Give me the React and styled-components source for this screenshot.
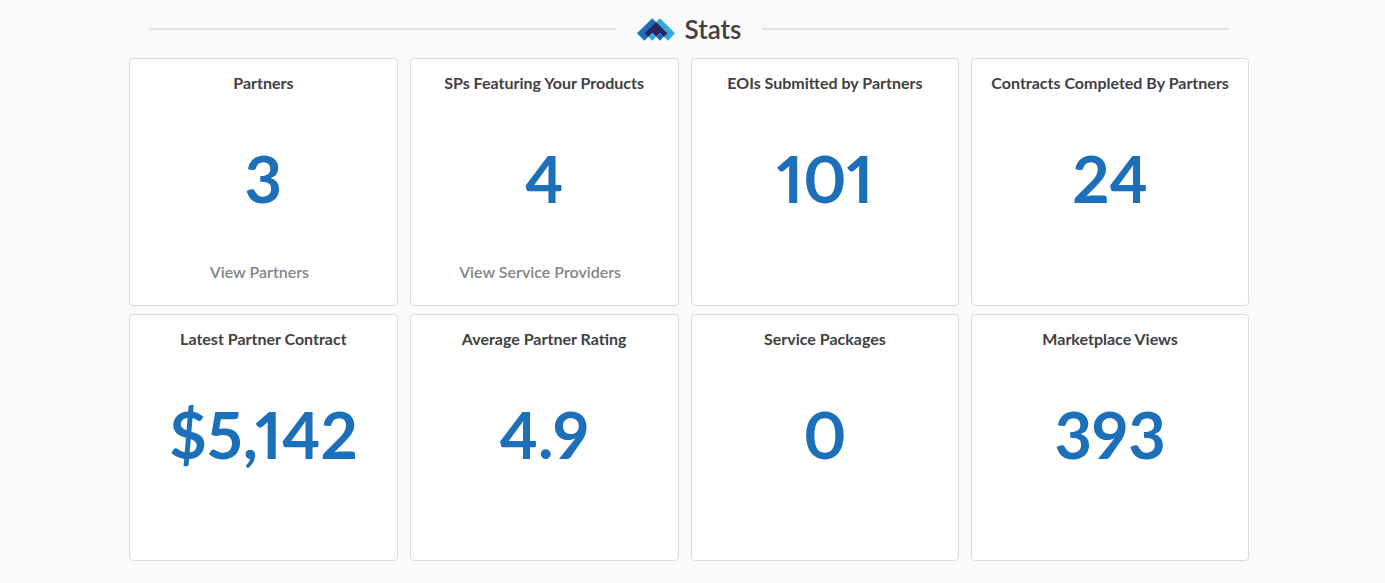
// App.jsx

import React from "react";
import styled, { createGlobalStyle } from "styled-components";

const GlobalStyle = createGlobalStyle`
  * {
    box-sizing: border-box;
  }

  body {
    margin: 0;
    background: #fafafa;
    color: #414042;
    font-family: Lato, "Open Sans", sans-serif;
  }
`;

const Page = styled.main`
  padding: 13px 7px 22px 0;
`;

const Container = styled.section`
  max-width: 1120px;
  margin: 0 auto;
`;

const Header = styled.header`
  display: flex;
  align-items: center;
  gap: 21px;
  padding: 0 20px;
  margin-bottom: 13px;
`;

const Line = styled.span`
  flex: 1;
  height: 2px;
  background: #e0e0e0;
`;

const Heading = styled.h2`
  display: flex;
  align-items: center;
  gap: 10px;
  margin: 0;
  font-size: 26px;
  font-weight: 600;
  line-height: 32px;
`;

const Grid = styled.div`
  display: grid;
  grid-template-columns: repeat(3, 269fr) 278fr;
  gap: 8px 12px;
`;

const Card = styled.article`
  display: flex;
  flex-direction: column;
  align-items: center;
  min-height: 247px;
  padding: 14px 8px 22px;
  background: #fff;
  border: 1px solid #dadada;
  border-radius: 4px;
  text-align: center;
`;

const Title = styled.h3`
  margin: 0;
  font-size: 16px;
  font-weight: 700;
  line-height: 20px;
`;

const Value = styled.p`
  margin: 45px 0 43px;
  color: #1c70b9;
  font-size: 65px;
  font-weight: 700;
  font-variant-numeric: proportional-nums;
  line-height: 80px;
`;

const CardLink = styled.a`
  margin-right: 8px;
  color: #858585;
  font-size: 16px;
  font-weight: 600;
  line-height: 22px;
  text-decoration: none;
`;

const Logo = () => (
  <svg width="38" height="23" viewBox="0 0 114 67" aria-hidden="true">
    <path d="M46 0L0 45L22 67L68 22Z" fill="#1c70b9" />
    <path d="M69 0L114 45L93 67L46 22Z" fill="#35a8e0" />
    <path d="M57 11L23 45L34 56L46 44L57 56L69 44L80 56L91 45Z" fill="#2a2560" />
    <path d="M46 44L57 55L46 67L34 55Z" fill="#35a8e0" />
    <path d="M69 44L80 55L69 67L57 55Z" fill="#1c70b9" />
  </svg>
);

const stats = [
  { title: "Partners", value: "3", link: "View Partners" },
  { title: "SPs Featuring Your Products", value: "4", link: "View Service Providers" },
  { title: "EOIs Submitted by Partners", value: "101" },
  { title: "Contracts Completed By Partners", value: "24" },
  { title: "Latest Partner Contract", value: "$5,142" },
  { title: "Average Partner Rating", value: "4.9" },
  { title: "Service Packages", value: "0" },
  { title: "Marketplace Views", value: "393" },
];

const App = () => {
  return (
    <Page>
      <GlobalStyle />
      <Container>
        <Header>
          <Line />
          <Heading>
            <Logo />
            Stats
          </Heading>
          <Line />
        </Header>

        <Grid>
          {stats.map((stat) => (
            <Card key={stat.title}>
              <Title>{stat.title}</Title>
              <Value>{stat.value}</Value>
              {stat.link && <CardLink href="#">{stat.link}</CardLink>}
            </Card>
          ))}
        </Grid>
      </Container>
    </Page>
  );
};

export default App;
